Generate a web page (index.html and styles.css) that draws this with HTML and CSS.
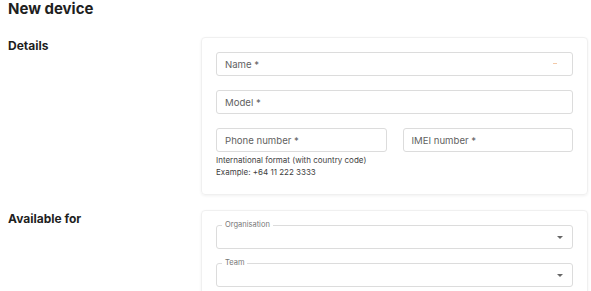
FILE: index.html
```html
<!DOCTYPE html>
<html lang="en">
<head>
    <meta charset="UTF-8">
    <meta name="viewport" content="width=device-width, initial-scale=1.0">
    <title>New device</title>
    <link rel="stylesheet" href="styles.css">
</head>
<body>
    <div class="page">
        <h1>New device</h1>

        <!-- Details -->
        <div class="section">
            <h2>Details</h2>
            <div class="card">
                <div class="field">
                    <span class="placeholder">Name *</span>
                    <span class="autofill"></span>
                </div>
                <div class="field">
                    <span class="placeholder">Model *</span>
                </div>
                <div class="row">
                    <div class="col">
                        <div class="field">
                            <span class="placeholder">Phone number *</span>
                        </div>
                        <p class="helper">International format (with country code)<br>Example: +64 11 222 3333</p>
                    </div>
                    <div class="col">
                        <div class="field">
                            <span class="placeholder">IMEI number *</span>
                        </div>
                    </div>
                </div>
            </div>
        </div>

        <!-- Available for -->
        <div class="section">
            <h2>Available for</h2>
            <div class="card">
                <div class="field select">
                    <span class="legend">Organisation</span>
                    <span class="arrow"></span>
                </div>
                <div class="field select">
                    <span class="legend">Team</span>
                    <span class="arrow"></span>
                </div>
            </div>
        </div>
    </div>
</body>
</html>
```

FILE: styles.css
```css
body {
    font-family: 'Inter', 'Liberation Sans', sans-serif;
    background-color: #fff;
    color: #1f1f1f;
    margin: 0;
    padding: 0;
}
.page {
    padding: 0 3px 0 8px;
}
h1 {
    font-size: 15px;
    font-weight: 700;
    line-height: 18px;
    margin: 0 0 19px;
}
.section {
    display: grid;
    grid-template-columns: 193px 1fr;
    margin-bottom: 15px;
}
h2 {
    font-size: 12px;
    font-weight: 700;
    line-height: 16px;
    margin: 1px 0 0;
}
.card {
    border: 1px solid #f0f0f0;
    border-radius: 4px;
    box-shadow: 0 1px 3px rgba(0, 0, 0, 0.06);
    padding: 14px 14px 16px;
    display: flex;
    flex-direction: column;
    gap: 14px;
}
.field {
    position: relative;
    height: 22px;
    border: 1px solid #dcdcdc;
    border-radius: 3px;
    display: flex;
    align-items: center;
    padding: 0 8px;
}
.placeholder {
    font-size: 9.6px;
    color: #5f5f5f;
}
.autofill {
    position: absolute;
    right: 15px;
    top: 10px;
    width: 4px;
    height: 1px;
    background-color: #f3c9a8;
}
.row {
    display: flex;
    gap: 16px;
}
.col {
    flex: 1;
}
.helper {
    font-size: 8px;
    line-height: 12px;
    color: #3f3f3f;
    margin: 2px 0 0;
}
.legend {
    position: absolute;
    left: 5px;
    top: -7px;
    padding: 0 3px;
    background-color: #fff;
    font-size: 7.5px;
    line-height: 12px;
    color: #777;
}
.arrow {
    position: absolute;
    right: 9px;
    top: 10px;
    width: 0;
    height: 0;
    border-left: 3.5px solid transparent;
    border-right: 3.5px solid transparent;
    border-top: 3.5px solid #666;
}
```
